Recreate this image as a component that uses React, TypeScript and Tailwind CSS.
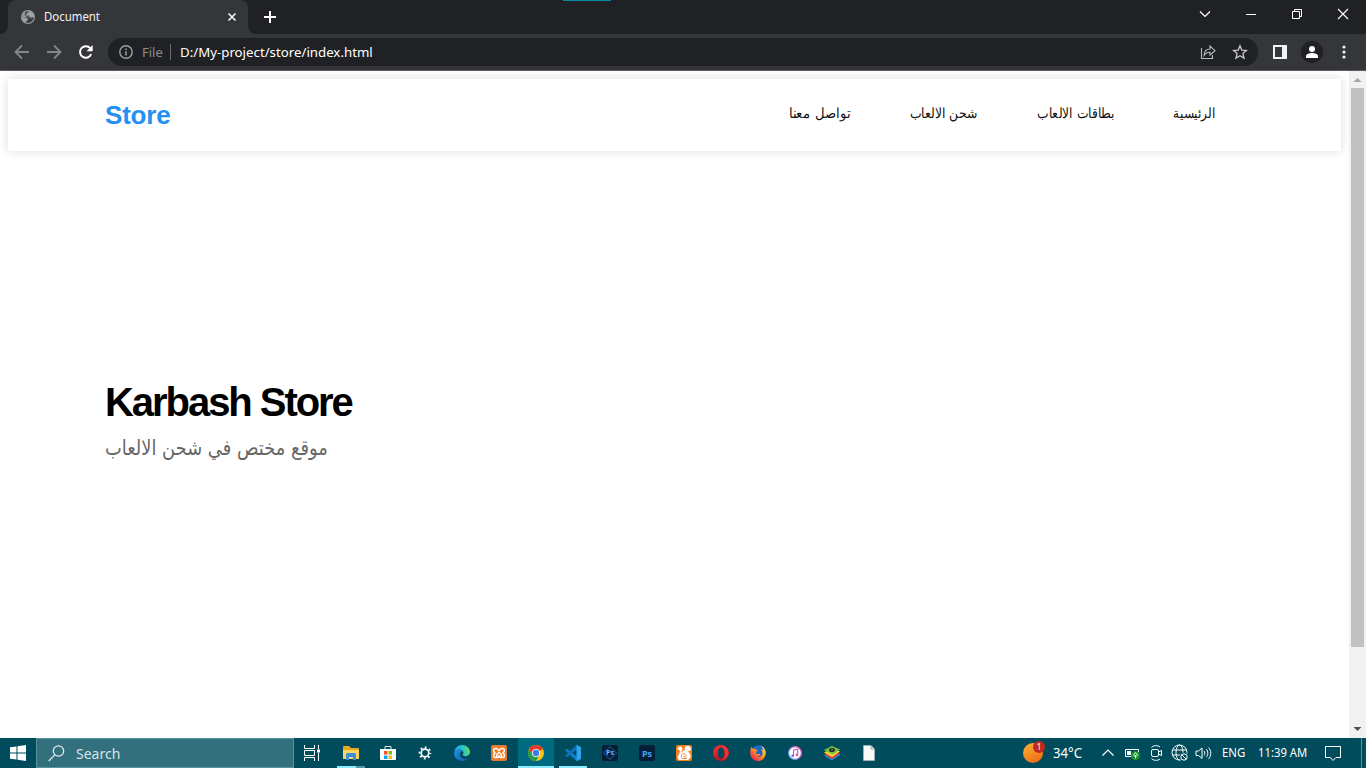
import type { ReactNode } from "react";

const ui = "font-['Noto_Sans','Open_Sans',sans-serif]";

function Svg({ w, h, box, className = "", children }: { w: number; h: number; box?: string; className?: string; children: ReactNode }) {
  return (
    <svg width={w} height={h} viewBox={box ?? `0 0 ${w} ${h}`} fill="none" className={`block shrink-0 ${className}`}>
      {children}
    </svg>
  );
}

function TabStrip() {
  return (
    <div className="flex h-[34px] shrink-0 items-start bg-[#202124]">
      <div className="flex h-full w-2 items-end bg-[#35363a]">
        <div className="h-full w-full rounded-br-lg bg-[#202124]" />
      </div>
      <div className="flex h-full w-60 items-center rounded-t-lg bg-[#35363a] pl-[13px]">
        <Svg w={14} h={14}>
          <circle cx="7" cy="7" r="7" fill="#9aa0a6" />
          <path d="M8.200 1.500C6.500 2 7.200 3.300 5.500 3.500 4.300 3.700 4.300 5 5.300 5.300c1.500.4 2.700 0 3.200 1.500.2 1 1.500.8 2.300.8h1.900C12.500 10.500 10 12.700 7 12.700c-.8 0-1.500-.1-1.800-.3 0-1.300.3-1.700 1.600-1.800.8-.1.900-1.800-.2-2.300C5 7.600 3.500 7.600 1.400 6.800" stroke="#35363a" strokeWidth="0.500" fill="#35363a" fillOpacity="0" />
          <path d="M1.300 6.700c1.700.2 3.200.2 4.700.9 1.500.6 1.700 2.200.6 3-.7.4-.9.900-.9 1.900 3 .6 6.500-1.600 7-4.800-1.200.8-3.500 1-4.400-.2-.7-1-1.300-1.200-2.700-1.300C4 6 3.600 4.200 5.100 3.500c1.200-.6.900-1.700 2.500-2.200C4 1 1.300 3.800 1.300 6.700z" fill="#35363a" />
          <path d="M1.300 6.700C1.300 4.500 2.700 2.600 4.600 1.800L3.500 5l2 2-1 .5z" fill="#9aa0a6" />
        </Svg>
        <span className={`ml-[9px] w-[183px] text-[12px] leading-4 text-[#f1f3f4] ${ui}`}>
          <span className="inline-block origin-left scale-x-[0.95]">Document</span>
        </span>
        <Svg w={10} h={10}>
          <path d="M1.500 1.500l7 7M8.500 1.500l-7 7" stroke="#f1f3f4" strokeWidth="1.700" />
        </Svg>
      </div>
      <div className="h-full w-2 bg-[#35363a]">
        <div className="h-full w-full rounded-bl-lg bg-[#202124]" />
      </div>
      <Svg w={12} h={12} className="ml-2 mt-[11px]">
        <path d="M6 0v12M0 6h12" stroke="#fff" strokeWidth="2" />
      </Svg>
      <div className="flex-1 self-stretch">
        <div className="ml-[287px] h-px w-12 bg-[#078ba5]" />
      </div>
      <div className="flex pr-[17px] pt-2">
        <Svg w={12} h={12} className="mr-[34px]"><path d="M1 3.500l5 5 5-5" stroke="#fff" strokeWidth="1.200" /></Svg>
        <Svg w={12} h={12} className="mr-[34px]"><path d="M1 6.500h10" stroke="#fff" /></Svg>
        <Svg w={12} h={12} className="mr-[34px]"><path d="M1.500 3.500h7v7h-7zM3.500 3V1.500h7v7H9" stroke="#fff" /></Svg>
        <Svg w={12} h={12}><path d="M1 1l10 10M11 1L1 11" stroke="#fff" strokeWidth="1.100" /></Svg>
      </div>
    </div>
  );
}

function Toolbar() {
  return (
    <div className="flex h-[37px] shrink-0 items-center border-b border-[#5b5860] bg-[#35363a] pl-[14px]">
      <Svg w={16} h={16} className="mr-4"><path d="M15 8H2M8 1.500L1.500 8 8 14.500" stroke="#85868a" strokeWidth="1.800" /></Svg>
      <Svg w={16} h={16} className="mr-4"><path d="M1 8h13M8 1.500L14.500 8 8 14.500" stroke="#85868a" strokeWidth="1.800" /></Svg>
      <Svg w={16} h={16}>
        <path d="M13.200 10.200A5.800 5.800 0 1 1 12.300 4.200" stroke="#fff" strokeWidth="2" />
        <path d="M14.700 1v6.300H8.500z" fill="#fff" />
      </Svg>
      <div className="ml-[14px] flex h-7 w-[1150px] items-center rounded-full bg-[#202124] pl-[11px]">
        <Svg w={14} h={14}>
          <circle cx="7" cy="7" r="6.200" stroke="#9aa0a6" strokeWidth="1.400" />
          <path d="M7 6.200v4.300M7 3.400v1.600" stroke="#9aa0a6" strokeWidth="1.500" />
        </Svg>
        <span className={`ml-[9px] w-7 text-[13px] leading-4 text-[#898d92] ${ui}`}>File</span>
        <div className="h-4 w-px bg-[#696c71]" />
        <span className={`ml-[9px] w-[1020px] whitespace-nowrap text-[13px] leading-4 text-white ${ui}`}>
          <span className="inline-block origin-left scale-x-[1.02]">D:/My-project/store/index.html</span>
        </span>
        <Svg w={16} h={16}>
          <path d="M1.500 4v10.500h11V11M4 11.500C4.300 7.300 6.500 5 10 5V2l5 4.700L10 11V8.300C7.500 8.300 5.500 9.200 4 11.500z" stroke="#b8babd" strokeWidth="1.100" />
        </Svg>
        <Svg w={16} h={16} className="ml-4">
          <path d="M8 1.800l1.800 4.300 4.600.4-3.500 3 1.100 4.600L8 11.700l-4 2.400 1.100-4.600-3.500-3 4.600-.4z" stroke="#c5c7ca" strokeWidth="1.300" />
        </Svg>
      </div>
      <Svg w={14} h={14} className="ml-[15px]"><path d="M0 0h14v14H0zM2 2v10h7V2z" fill="#f1f3f4" fillRule="evenodd" /></Svg>
      <div className="ml-[14px] flex size-[22px] items-center justify-center rounded-full bg-[#202124]">
        <Svg w={12} h={12}><circle cx="6" cy="3" r="3" fill="#fff" /><path d="M0 12v-1.700C0 8.300 3 7 6 7s6 1.300 6 3.300V12z" fill="#fff" /></Svg>
      </div>
      <Svg w={4} h={14} className="ml-[19px]"><circle cx="2" cy="2" r="1.600" fill="#f1f3f4" /><circle cx="2" cy="7" r="1.600" fill="#f1f3f4" /><circle cx="2" cy="12" r="1.600" fill="#f1f3f4" /></Svg>
    </div>
  );
}

function Page() {
  return (
    <div className="flex min-h-0 flex-1 bg-white">
      <main className="w-[1349px] overflow-hidden p-2">
        <nav className="flex h-[72px] w-[1333px] items-center justify-between bg-white pl-[97px] pr-[126px] shadow-[0_0_10px_rgba(0,0,0,0.14)]">
          <a className="font-['Liberation_Sans',sans-serif] text-[26px] font-bold leading-8 tracking-[-0.200px] text-[#2490f2]">Store</a>
          <ul dir="rtl" className="flex gap-[59px] pb-[4px] font-['DejaVu_Sans',sans-serif] text-[14px] font-light leading-5 text-[#111]">
            <li className="w-[42px] whitespace-nowrap"><span className="inline-block origin-right scale-x-[0.87]">الرئيسية</span></li>
            <li className="w-[78px] whitespace-nowrap"><span className="inline-block origin-right scale-x-[0.88]">بطاقات الالعاب</span></li>
            <li className="w-[68px] whitespace-nowrap"><span className="inline-block origin-right scale-x-[0.885]">شحن الالعاب</span></li>
            <li className="w-[62px] whitespace-nowrap"><span className="inline-block origin-right scale-x-[0.94]">تواصل معنا</span></li>
          </ul>
        </nav>
        <section className="pl-[97px] pt-[227px]">
          <h1 className="font-['Liberation_Sans',sans-serif] text-[40px] font-bold leading-[48px] tracking-[-2.050px] text-black">Karbash Store</h1>
          <p className="mt-[6px] w-[222px] whitespace-nowrap font-['DejaVu_Sans',sans-serif] text-[21px] leading-8 text-[#666]">
            <span dir="rtl" className="inline-block origin-left scale-x-[0.85]">موقع مختص في شحن الالعاب</span>
          </p>
        </section>
      </main>
      <div className="flex w-[17px] flex-col items-center bg-[#f1f1f1]">
        <Svg w={17} h={17}><path d="M4.500 11h8L8.500 7z" fill="#a3a3a3" /></Svg>
        <div className="h-[559px] w-[13px] bg-[#c1c1c1]" />
        <Svg w={17} h={17} className="mt-auto"><path d="M4.500 6h8l-4 4z" fill="#505050" /></Svg>
      </div>
    </div>
  );
}

const taskView = (
  <Svg w={18} h={18}>
    <path d="M1.500 1v3.500h10V1M1.500 17v-3.500h10V17M1.500 6.500h10v5h-10zM15.500 1v4M15.500 9v8" stroke="#fff" />
    <path d="M14 5.500h3v3h-3z" fill="#fff" />
  </Svg>
);
const explorer = (
  <Svg w={16} h={16}>
    <path d="M0 2q0-1 1-1h5l2 2h7q1 0 1 1v10H0z" fill="#e8a91d" />
    <path d="M0 5h16v8q0 1-1 1H1q-1 0-1-1z" fill="#ffd45c" />
    <path d="M3 15V9.500Q3 8 4.500 8h7Q13 8 13 9.500V15h-3v-3H6v3z" fill="#3d8fdd" />
  </Svg>
);
const store = (
  <Svg w={16} h={16}>
    <path d="M5 4V1.500h6V4" stroke="#dfe7ea" />
    <path d="M0 4h16v10q0 1-1 1H1q-1 0-1-1z" fill="#fff" />
    <path d="M4 6h3.500v3.500H4z" fill="#f35325" /><path d="M8.500 6H12v3.500H8.500z" fill="#81bc06" />
    <path d="M4 10.500h3.500V14H4z" fill="#05a6f0" /><path d="M8.500 10.500H12V14H8.500z" fill="#ffba08" />
  </Svg>
);
const gear = (
  <Svg w={14} h={14}>
    <circle cx="7" cy="7" r="3.800" stroke="#fff" strokeWidth="1.700" />
    <circle cx="7" cy="7" r="5.500" stroke="#fff" strokeWidth="1.800" strokeDasharray="1.900 2.420" strokeDashoffset="0.950" />
  </Svg>
);
const edge = (
  <Svg w={16} h={16}>
    <defs>
      <linearGradient id="eg" x1="0" y1="6" x2="16" y2="4" gradientUnits="userSpaceOnUse"><stop stopColor="#28a7e3" /><stop offset=".55" stopColor="#27c3cb" /><stop offset="1" stopColor="#69db59" /></linearGradient>
      <linearGradient id="eb" x1="0" y1="5" x2="10" y2="16" gradientUnits="userSpaceOnUse"><stop stopColor="#1b93df" /><stop offset="1" stopColor="#1263b5" /></linearGradient>
    </defs>
    <path d="M.3 6.800C1 2.800 4.200 0 8 0c4.600 0 8 3.400 8 7.100 0 2.600-2 4.100-4.300 4.100-2 0-3-.7-3-1.400 0-.4.800-.8.800-2C9.500 5.800 7.400 4.500 5.300 4.500 2.500 4.500.8 6 .3 6.800z" fill="url(#eg)" />
    <path d="M.1 8.300C.1 5.900 2.500 4.500 5 4.500c1.400 0 2.700.6 3.500 1.400C6.700 6.500 5.800 8 5.800 9.500c0 2.500 2.700 4.500 5.500 4.500 1.500 0 2.900-.6 3.500-1C13.300 15 10.700 16 8.300 16 3.700 16 0 12.500.1 8.300z" fill="url(#eb)" />
  </Svg>
);
const xampp = (
  <Svg w={16} h={16}>
    <rect x=".5" y=".5" width="15" height="15" rx="1" fill="#f47a24" stroke="#dc7a3a" />
    <path d="M4.200 3.500h1.500L8 5.500l2.300-2h1.500q1.500 0 1.500 1.500v1.500L12 8l1.300 1.500V11q0 1.500-1.500 1.500h-1.500V9.300L8 7.500 5.700 9.300v3.200H4.200q-1.500 0-1.500-1.500V9.500L4 8 2.700 6.500V5q0-1.500 1.500-1.500z" stroke="#fff" strokeWidth="1.500" />
    <path d="M6 12.500c2 0 2-1.300 2-2.300 0 1 0 2.300 2.300 2.300" stroke="#fff" strokeWidth="1.300" />
  </Svg>
);
const chrome = (
  <Svg w={16} h={16}>
    <circle cx="8" cy="8" r="8" fill="#fbc116" />
    <path d="M8 8L1.070 4A8 8 0 0 1 14.930 4z" fill="#e33b2e" />
    <path d="M1.070 4A8 8 0 0 0 8 16l3.460-6L8 8 4.540 10z" fill="#269d4b" />
    <path d="M1.070 4L4.540 10 8 4h6.930z" fill="#e33b2e" />
    <circle cx="8" cy="8" r="4" fill="#fff" /><circle cx="8" cy="8" r="3.200" fill="#3b7ded" />
  </Svg>
);
const vscode = (
  <Svg w={16} h={16}>
    <path d="M0 5.300l1.600-1.500L13 12.200v3.600l-1.500.2z" fill="#0c80c8" />
    <path d="M0 10.700l1.600 1.500L13 3.800V.2L11.500 0z" fill="#0e70b8" />
    <path d="M11.500 0L16 2v12l-4.500 2z" fill="#2ba5ee" />
  </Svg>
);
const psExpress = (
  <div className="flex size-4 items-center justify-center rounded-[2px] bg-[#061e37]">
    <Svg w={16} h={16}>
      <path d="M8 1.500L14.500 8 8 14.500 1.500 8z" stroke="#2a73ac" strokeWidth=".8" />
      <text x="8" y="10.400" textAnchor="middle" fontFamily="Open Sans" fontSize="7" fontWeight="700" fill="#65bdff">Ps</text>
    </Svg>
  </div>
);
const photoshop = (
  <div className={`flex size-4 items-center justify-center rounded-[2px] bg-[#061e37] text-[9px] font-bold leading-none text-[#43a8f5] ${ui}`}>Ps</div>
);
const ucBrowser = (
  <Svg w={16} h={16}>
    <rect width="16" height="16" rx="2" fill="#f78021" />
    <path d="M.8 3.700C2.500 3.600 2.700 1.400 4.500 1.600 6.200 1.800 6.500 3.500 6.300 5L5 7.500c1.500 0 2-2.500 4-2.500-1-2.500.6-4 2.500-4 2.500 0 4 2 3.300 3.800-.5 1.500-2.500 1.800-3.300.7 0 1.300 1.500 1.800 2.500 3.200 1.800 3-.3 6.300-3.500 6.300H3c-1.800-2-1.300-4.500 0-5.800 1-1 1-3 .5-4.200z" fill="#fff" />
    <path d="M5.500 12.500c-.7-2 .5-3.700 2.300-3.800 2-.1 3 1.800 2 3-.8 1-2.200.5-2-.6M6 13.500h5" stroke="#f78021" strokeWidth=".9" />
  </Svg>
);
const opera = (
  <Svg w={16} h={16}>
    <defs><linearGradient id="op" x1="3" y1="0" x2="12" y2="16" gradientUnits="userSpaceOnUse"><stop stopColor="#ff3036" /><stop offset="1" stopColor="#b10e1a" /></linearGradient></defs>
    <path fillRule="evenodd" d="M8 0a8 8 0 1 0 0 16A8 8 0 0 0 8 0zm0 2.500c2 0 3.200 2.400 3.200 5.500S10 13.500 8 13.500 4.800 11.100 4.800 8 6 2.500 8 2.500z" fill="url(#op)" />
    <path d="M8 .5c4 0 7.500 3.500 7.500 7.500S12 15.500 8 15.500c2.500-1 4.200-4 4.200-7.500S10.500 1.500 8 .5z" fill="#ff656a" opacity=".4" />
  </Svg>
);
const firefox = (
  <Svg w={16} h={16}>
    <defs>
      <linearGradient id="ff" x1="14" y1="2" x2="3" y2="15" gradientUnits="userSpaceOnUse"><stop stopColor="#ffe338" /><stop offset=".5" stopColor="#ff8f21" /><stop offset="1" stopColor="#ef2457" /></linearGradient>
    </defs>
    <circle cx="8.500" cy="7.300" r="7" fill="#1c66c9" />
    <path d="M1 2.200c.7 0 1.300.7 1.700 1.500C4 3.200 5 3.500 6 4.700l2 .6-2 1.600c0 2 1.300 2.600 3 1.900l1.500.7c-.8 1.700-2.500 2.200-4 1.700 2.500 1.700 5.700.5 6-2.700.2-2-.8-3.700-1.700-4.500 1.300.2 2.200 1 2.700 1.700C13.200 3.700 12 1.700 10 .5c3.500.8 5.700 4 5.700 7.500C15.700 12.500 12.500 16 8 16S.3 12.700.3 8.500C.2 6 .5 4 1 2.200z" fill="url(#ff)" />
  </Svg>
);
const itunes = (
  <Svg w={14} h={14}>
    <defs><linearGradient id="it" x1="1" y1="12" x2="13" y2="1" gradientUnits="userSpaceOnUse"><stop stopColor="#47b9f1" /><stop offset=".5" stopColor="#bd65dc" /><stop offset="1" stopColor="#f65682" /></linearGradient></defs>
    <circle cx="7" cy="7" r="6.400" fill="#fff" stroke="url(#it)" strokeWidth="1.200" />
    <path d="M5.500 9.700V4.300l4.200-1v5.500" stroke="#bd55d1" strokeWidth="1.100" />
    <circle cx="4.700" cy="9.800" r="1.300" fill="#845ee0" /><circle cx="8.900" cy="8.900" r="1.300" fill="#ef5590" />
  </Svg>
);
const bluestacks = (
  <Svg w={16} h={16}>
    <path d="M0 10.500l8-3 8 1.500v1l-8 5.500z" fill="#238edb" /><path d="M0 9l8-3 8 2-8 6z" fill="#e73336" />
    <path d="M0 7.300l8-3 8 2-8 6z" fill="#f9da2d" /><path d="M0 5l8-4 8 3.500-7.500 5.300z" fill="#79c143" />
    <ellipse cx="8" cy="5" rx="3" ry="2" fill="#1d3525" /><circle cx="8" cy="4.800" r=".8" fill="#c96a9a" />
  </Svg>
);
const file = (
  <Svg w={12} h={16}><path d="M.5.500h7.500L11.500 4v11.500H.500z" fill="#f8f8f8" stroke="#aeb8bb" strokeWidth=".7" /><path d="M8 .5V4h3.500" stroke="#8c999d" strokeWidth=".8" /></Svg>
);

const apps: { name: string; icon: ReactNode; state?: "open" | "active" | "stacked" }[] = [
  { name: "explorer", icon: explorer, state: "stacked" },
  { name: "store", icon: store },
  { name: "settings", icon: gear },
  { name: "edge", icon: edge },
  { name: "xampp", icon: xampp },
  { name: "chrome", icon: chrome, state: "active" },
  { name: "vscode", icon: vscode, state: "open" },
  { name: "ps-express", icon: psExpress },
  { name: "photoshop", icon: photoshop },
  { name: "uc", icon: ucBrowser },
  { name: "opera", icon: opera },
  { name: "firefox", icon: firefox },
  { name: "itunes", icon: itunes },
  { name: "bluestacks", icon: bluestacks },
  { name: "file", icon: file },
];

function Taskbar() {
  return (
    <footer className={`flex h-[30px] shrink-0 items-center bg-[#004c5c] text-white ${ui}`}>
      <div className="flex w-9 justify-center">
        <Svg w={16} h={16}><path d="M0 2.300L6.500 1.400v6.100H0zM7.500 1.200L16 0v7.500H7.500zM0 8.500h6.500v6.100L0 13.700zM7.500 8.500H16V16l-8.500-1.200z" fill="#fff" /></Svg>
      </div>
      <div className="flex h-full w-[258px] items-center border border-[#5a929d] bg-[#33707d] pl-[11px]">
        <Svg w={17} h={17}><circle cx="10.500" cy="6" r="5.200" stroke="#e6eff1" strokeWidth="1.200" /><path d="M6.800 9.800L.7 16" stroke="#e6eff1" strokeWidth="1.200" /></Svg>
        <span className="ml-[11px] pt-px text-[14px] leading-5 text-[#d7e4e7]">Search</span>
      </div>
      <div className="mr-[3px] flex w-9 justify-center">{taskView}</div>
      <div className="flex h-full gap-px">
        {apps.map((a) => (
          <div key={a.name} className={`flex h-full w-9 flex-col items-center ${a.state === "active" ? "bg-[#006a80]" : ""}`}>
            <div className="flex h-7 items-center justify-center pt-[2px]">{a.icon}</div>
            {a.state === "active" && <div className="h-[2px] w-full bg-[#8cecff]" />}
            {a.state === "open" && <div className="h-[2px] w-7 bg-[#8cecff]" />}
            {a.state === "stacked" && <div className="flex h-[2px] w-7 bg-[#5298a7]"><div className="mr-px w-[19px] bg-[#8cecff]" /></div>}
          </div>
        ))}
      </div>
      <div className="ml-auto flex h-full items-center text-[12px]">
        <div className="relative mr-[8px] h-[22px] w-[22px]">
          <Svg w={22} h={22}>
            <defs><linearGradient id="sun" x1="3" y1="2" x2="14" y2="21" gradientUnits="userSpaceOnUse"><stop stopColor="#f8ac32" /><stop offset="1" stopColor="#f06b16" /></linearGradient></defs>
            <circle cx="10" cy="11" r="10" fill="url(#sun)" />
          </Svg>
          <span className="absolute -top-px left-[10px] flex size-3 items-center justify-center rounded-full bg-[#c22a20] text-[8px] leading-none">1</span>
        </div>
        <span className="w-[48px] whitespace-nowrap text-[14px] leading-5"><span className="inline-block origin-left scale-x-[0.94]">34°C</span></span>
        <Svg w={14} h={14}><path d="M1.500 9.500L7 4l5.500 5.500" stroke="#fff" strokeWidth="1.200" /></Svg>
        <Svg w={16} h={16} className="ml-[9px] mr-px">
          <path d="M1.500 4.500h13v7h-13z" stroke="#fff" /><path d="M3 6h4v4H3z" fill="#fff" />
          <circle cx="11.500" cy="10.500" r="4.500" fill="#18922d" /><path d="M11.500 13.500V10M11.500 7.500l2 2.500-2 2-2-2z" stroke="#fff" strokeWidth=".9" />
        </Svg>
        <Svg w={14} h={18} className="ml-[9px]">
          <rect x="1.500" y="5.500" width="7" height="7" rx="1.500" stroke="#fff" /><path d="M8.500 8l3-1.500v5l-3-1.500" stroke="#fff" />
          <path d="M1.500 3.500C3 1.300 8 1 10 3M1.500 14.500c1.500 2.200 6.500 2.500 8.500.5" stroke="#fff" />
        </Svg>
        <Svg w={18} h={18} className="ml-[7px] mr-px">
          <circle cx="8.500" cy="8.500" r="7.500" stroke="#fff" /><ellipse cx="8.500" cy="8.500" rx="3.500" ry="7.500" stroke="#fff" /><path d="M1 6h15M1 11h9" stroke="#fff" />
          <circle cx="13" cy="13" r="4.500" fill="#004c5c" /><circle cx="13" cy="13" r="3.200" stroke="#fff" /><path d="M10.800 10.800l4.400 4.400" stroke="#fff" />
        </Svg>
        <Svg w={17} h={16} className="ml-[5px] mr-px">
          <path d="M1 6h2.500L7 3v10.500L3.500 10.500H1z" stroke="#fff" /><path d="M9 6c1 1 1 3.500 0 4.500M11.300 4.200c2 2 2 6 0 8M13.500 2.500c3 3 3 8.500 0 11.500" stroke="#fff" />
        </Svg>
        <span className="ml-[9px] w-[36px] text-[12px]"><span className="inline-block origin-left scale-x-[0.95]">ENG</span></span>
        <span className="w-[67px] whitespace-nowrap text-[12px]"><span className="inline-block origin-left scale-x-[0.94]">11:39 AM</span></span>
        <Svg w={18} h={16} className="-ml-px mr-px"><path d="M1.500 1.500h15v11h-4.500L9 15.500 6.500 12.500h-5z" stroke="#fff" /></Svg>
        <div className="ml-[18px] h-full w-px bg-[#5b8f9a]" />
        <div className="w-1" />
      </div>
    </footer>
  );
}

export default function App() {
  return (
    <div className="flex h-[768px] w-[1366px] flex-col overflow-hidden bg-white">
      <TabStrip />
      <Toolbar />
      <Page />
      <Taskbar />
    </div>
  );
}
